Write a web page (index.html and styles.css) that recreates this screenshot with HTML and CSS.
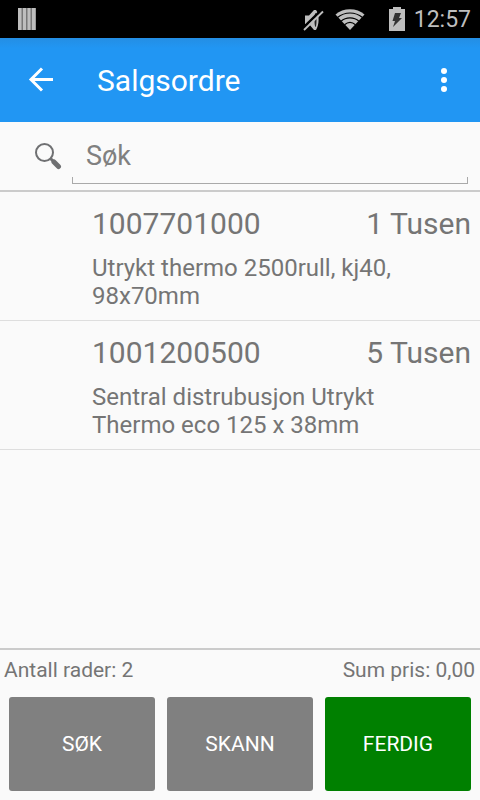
FILE: index.html
```html
<!DOCTYPE html>
<html lang="no">
<head>
    <meta charset="UTF-8">
    <meta name="viewport" content="width=device-width, initial-scale=1">
    <title>Salgsordre</title>
    <link rel="stylesheet" href="styles.css">
</head>
<body>
    <div class="status-bar">
        <svg class="status-app" width="18" height="22" viewBox="0 0 18 22">
            <rect width="18" height="22" fill="#777"/>
            <path d="M0 0h3.5v22H0zM5 0h3v22H5zM9.500 0h3v22h-3zM14 0h3.500v22H14z" fill="#bebebe"/>
        </svg>
        <svg class="status-mute" width="22" height="24" viewBox="0 0 22 24">
            <path d="M2 8.500h4L11 3h2c3.500 4 3.500 15 0 20h-2l-5-6H2z" fill="#bebebe"/>
            <ellipse cx="12.500" cy="13" rx="1" ry="7" fill="#222"/>
            <path d="M-0.500 21.500L18.500 3" stroke="#000" stroke-width="2.500"/>
            <path d="M1 23L20 4.500" stroke="#bebebe" stroke-width="1.800"/>
        </svg>
        <svg class="status-wifi" width="30" height="24" viewBox="0 0 30 24">
            <path d="M0.500 7.500C8 .5 22 .5 29.500 7.500L15 23z" fill="#bebebe"/>
            <path d="M2.500 10.500C10 4.500 20 4.500 27.500 10.500M6 14.200C11 9.700 19 9.700 24 14.200M9.500 17.800C13 14.800 17 14.800 20.500 17.800" fill="none" stroke="#000" stroke-width="1.200"/>
        </svg>
        <svg class="status-battery" width="16" height="24" viewBox="0 0 16 24">
            <path d="M0 2h4V0h8v2h4v22H0z" fill="#bebebe"/>
            <path d="M6 6h6l-2 5h3L4 20l2-6H3.500z" fill="#333"/>
        </svg>
        <span class="clock">12:57</span>
    </div>

    <header class="toolbar">
        <button class="icon-button" type="button" aria-label="Tilbake">
            <svg width="26" height="26" viewBox="0 0 26 26" fill="none" stroke="#fff" stroke-width="3">
                <path d="M26 12.500H4M15 1.500L4 12.500l11 11"/>
            </svg>
        </button>
        <h1>Salgsordre</h1>
        <button class="icon-button" type="button" aria-label="Meny">
            <svg width="26" height="26" viewBox="0 0 26 26" fill="#fff">
                <circle cx="13" cy="4" r="3"/>
                <circle cx="13" cy="13" r="3"/>
                <circle cx="13" cy="22" r="3"/>
            </svg>
        </button>
    </header>

    <form class="search">
        <svg width="28" height="28" viewBox="0 0 28 28" fill="none" stroke="#6f7072">
            <circle cx="10.500" cy="10.500" r="8.500" stroke-width="2"/>
            <path d="M16.500 16.500l3 3" stroke-width="3"/>
            <path d="M20 20l4.500 4.500" stroke-width="5" stroke-linecap="round"/>
        </svg>
        <div class="search-field">
            <input type="text" placeholder="Søk" aria-label="Søk">
        </div>
    </form>

    <main>
        <ul class="order-lines">
            <li>
                <div class="line-head">
                    <span>1007701000</span>
                    <span>1 Tusen</span>
                </div>
                <p>Utrykt thermo 2500rull, kj40, 98x70mm</p>
            </li>
            <li>
                <div class="line-head">
                    <span>1001200500</span>
                    <span>5 Tusen</span>
                </div>
                <p>Sentral distrubusjon Utrykt Thermo eco 125 x 38mm</p>
            </li>
        </ul>
    </main>

    <footer>
        <div class="summary">
            <span>Antall rader: 2</span>
            <span>Sum pris: 0,00</span>
        </div>
        <div class="actions">
            <button class="action" type="button">SØK</button>
            <button class="action" type="button">SKANN</button>
            <button class="action done" type="button">FERDIG</button>
        </div>
    </footer>
</body>
</html>
```
FILE: styles.css
```css
:root {
    --blue: #2196f3;
    --background: #fafafa;
    --text: #757575;
    --line: #cbcbcb;
}

* {
    margin: 0;
    padding: 0;
    box-sizing: border-box;
}

body {
    display: flex;
    flex-direction: column;
    min-height: 100vh;
    font-family: Roboto, "Liberation Sans", sans-serif;
    background-color: var(--background);
    color: var(--text);
}

.status-bar {
    display: flex;
    align-items: center;
    height: 38px;
    padding: 0 9px 0 18px;
    background-color: #000;
}

.status-mute {
    margin-left: auto;
}

.status-wifi {
    margin-left: 10px;
}

.status-battery {
    margin: 0 9px 0 24px;
}

.clock {
    font-size: 23px;
    color: #bebebe;
}

.toolbar {
    display: flex;
    align-items: center;
    height: 84px;
    padding: 0 12px 0 16px;
    background: linear-gradient(#248ee4, var(--blue) 10px);
    color: #fff;
}

.icon-button {
    display: flex;
    align-items: center;
    justify-content: center;
    width: 48px;
    height: 48px;
    border: none;
    background: none;
    cursor: pointer;
}

h1 {
    flex: 1;
    margin-left: 33px;
    font-size: 30px;
    font-weight: 400;
}

.search {
    display: flex;
    align-items: center;
    height: 70px;
    padding: 0 12px 0 34px;
    border-bottom: 2px solid var(--line);
}

.search-field {
    position: relative;
    flex: 1;
    margin-left: 10px;
}

/* the small upright ticks at both ends of the underline */
.search-field::after {
    content: "";
    position: absolute;
    left: 0;
    right: 0;
    bottom: 0;
    height: 6px;
    border: 1px solid #a9a9a9;
    border-top: none;
    pointer-events: none;
}

input {
    display: block;
    width: 100%;
    height: 56px;
    padding: 0 14px;
    border: none;
    outline: none;
    background: none;
    font-family: inherit;
    font-size: 27px;
    color: var(--text);
}

input::placeholder {
    color: #808080;
    opacity: 1;
}

main {
    flex: 1;
}

.order-lines {
    list-style: none;
}

.order-lines li {
    padding: 14px 9px 10px 92px;
    border-bottom: 1px solid #dedede;
}

.line-head {
    display: flex;
    justify-content: space-between;
    margin-bottom: 12px;
    font-size: 30px;
    line-height: 36px;
}

.order-lines p {
    max-width: 320px;
    font-size: 24px;
    line-height: 28px;
}

footer {
    border-top: 2px solid var(--line);
}

.summary {
    display: flex;
    justify-content: space-between;
    padding: 6px 5px 8px 4px;
    font-size: 21px;
    line-height: 28px;
}

.actions {
    display: grid;
    grid-template-columns: repeat(3, 1fr);
    gap: 12px;
    padding: 5px 9px 9px;
}

.action {
    height: 94px;
    border: none;
    border-radius: 3px;
    background-color: #808080;
    color: #fff;
    font-family: inherit;
    font-size: 21px;
    cursor: pointer;
}

.done {
    background-color: #008000;
}
```
